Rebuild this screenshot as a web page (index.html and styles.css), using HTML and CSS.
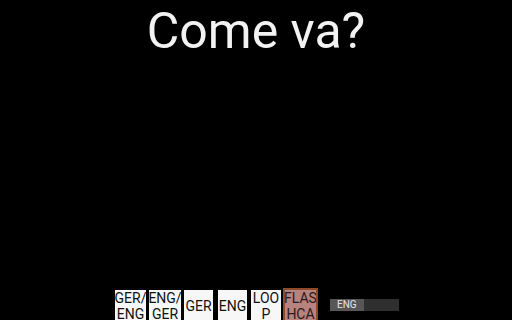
FILE: index.html
```html
<!DOCTYPE html>
<html lang="it">
<head>
  <meta charset="UTF-8" />
  <meta name="viewport" content="width=device-width, initial-scale=1.0"/>
  <title>Flashcards</title>
  <link rel="stylesheet" href="styles.css">
</head>
<body>
  <div class="screen">
    <h1 class="phrase">Come va?</h1>

    <div class="toolbar">
      <div class="modes">
        <div class="mode m-gereng"><span>GER/</span><span>ENG</span></div>
        <div class="mode m-enggger"><span>ENG/</span><span>GER</span></div>
        <div class="mode m-ger"><span>GER</span></div>
        <div class="mode m-eng"><span>ENG</span></div>
        <div class="mode m-loop"><span>LOO</span><span>P</span></div>
        <div class="mode mode-active"><span>FLAS</span><span>HCA</span></div>
      </div>
      <div class="lang-bar">
        <div class="lang-fill">ENG</div>
      </div>
    </div>
  </div>
</body>
</html>
```

FILE: styles.css
```css
html, body {
  margin: 0;
  background: #000;
}

body {
  font-family: Roboto, "Noto Sans", sans-serif;
  overflow: hidden;
}

.screen {
  width: 512px;
  height: 320px;
  display: flex;
  flex-direction: column;
}

.phrase {
  margin: 0;
  padding-top: 2px;
  font-size: 50px;
  font-weight: 400;
  line-height: 58px;
  color: #f2f2f2;
  text-align: center;
}

.toolbar {
  margin-top: auto;
  height: 32px;
  display: flex;
  align-items: flex-start;
  padding-left: 115px;
}

.modes {
  display: flex;
  align-items: flex-start;
}

.mode {
  height: 28px;
  padding-top: 2px;
  margin-top: 2px;
  background: #f7f7f7;
  color: #111;
  font-size: 14px;
  line-height: 16px;
  white-space: nowrap;
  overflow: hidden;
  display: flex;
  flex-direction: column;
  justify-content: center;
  align-items: center;
}

.m-gereng { width: 31px; }
.m-enggger { width: 32px; margin-left: 3px; }
.m-ger { width: 29px; margin-left: 3px; }
.m-eng { width: 29px; margin-left: 5px; }
.m-loop { width: 30px; margin-left: 4px; }

.mode-active {
  width: 31px;
  height: 32px;
  margin-left: 2px;
  margin-top: 0;
  padding-top: 2px;
  border: 2px solid #8e4b2a;
  border-top: 0;
  border-bottom: 0;
  box-shadow: inset 0 2px 0 #8e4b2a;
  background: #b7837f;
  color: #2a1a18;
  justify-content: flex-start;
}

.lang-bar {
  margin-left: 12px;
  margin-top: 11px;
  width: 69px;
  height: 12px;
  background: #2f2f2f;
}

.lang-fill {
  width: 34px;
  height: 12px;
  background: #575757;
  color: #e6e6e6;
  font-size: 10px;
  line-height: 12px;
  padding-left: 7px;
  box-sizing: border-box;
}
```
